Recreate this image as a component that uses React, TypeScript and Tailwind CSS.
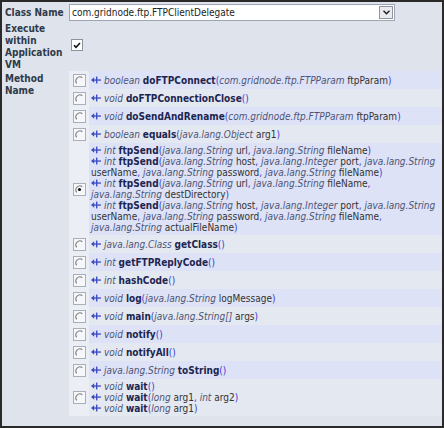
import React from "react";

type Param = { t: string; n: string };
type Method = { type: string; name: string; params: Param[] };

const S = "java.lang.String";

const rows: { methods: Method[]; selected?: boolean }[] = [
  { methods: [{ type: "boolean", name: "doFTPConnect", params: [{ t: "com.gridnode.ftp.FTPParam", n: "ftpParam" }] }] },
  { methods: [{ type: "void", name: "doFTPConnectionClose", params: [] }] },
  { methods: [{ type: "void", name: "doSendAndRename", params: [{ t: "com.gridnode.ftp.FTPParam", n: "ftpParam" }] }] },
  { methods: [{ type: "boolean", name: "equals", params: [{ t: "java.lang.Object", n: "arg1" }] }] },
  {
    selected: true,
    methods: [
      { type: "int", name: "ftpSend", params: [{ t: S, n: "url" }, { t: S, n: "fileName" }] },
      {
        type: "int",
        name: "ftpSend",
        params: [
          { t: S, n: "host" },
          { t: "java.lang.Integer", n: "port" },
          { t: S, n: "userName" },
          { t: S, n: "password" },
          { t: S, n: "fileName" },
        ],
      },
      { type: "int", name: "ftpSend", params: [{ t: S, n: "url" }, { t: S, n: "fileName" }, { t: S, n: "destDirectory" }] },
      {
        type: "int",
        name: "ftpSend",
        params: [
          { t: S, n: "host" },
          { t: "java.lang.Integer", n: "port" },
          { t: S, n: "userName" },
          { t: S, n: "password" },
          { t: S, n: "fileName" },
          { t: S, n: "actualFileName" },
        ],
      },
    ],
  },
  { methods: [{ type: "java.lang.Class", name: "getClass", params: [] }] },
  { methods: [{ type: "int", name: "getFTPReplyCode", params: [] }] },
  { methods: [{ type: "int", name: "hashCode", params: [] }] },
  { methods: [{ type: "void", name: "log", params: [{ t: S, n: "logMessage" }] }] },
  { methods: [{ type: "void", name: "main", params: [{ t: "java.lang.String[]", n: "args" }] }] },
  { methods: [{ type: "void", name: "notify", params: [] }] },
  { methods: [{ type: "void", name: "notifyAll", params: [] }] },
  { methods: [{ type: "java.lang.String", name: "toString", params: [] }] },
  {
    methods: [
      { type: "void", name: "wait", params: [] },
      { type: "void", name: "wait", params: [{ t: "long", n: "arg1" }, { t: "int", n: "arg2" }] },
      { type: "void", name: "wait", params: [{ t: "long", n: "arg1" }] },
    ],
  },
];

function Arrow() {
  return (
    <svg width="10" height="8" viewBox="0 0 10 8" className="inline-block align-[0px] mr-[3px]">
      <path d="M0 4 L3.2 1.2 L3.2 6.8 Z" fill="#3d4cc0" />
      <rect x="2" y="3.4" width="8" height="1.3" fill="#3d4cc0" />
      <rect x="5" y="0.6" width="1.4" height="6.8" fill="#3d4cc0" />
    </svg>
  );
}

function Radio({ checked }: { checked?: boolean }) {
  return (
    <svg width="13" height="13" viewBox="0 0 13 13">
      <rect x="0.5" y="0.5" width="12" height="12" fill="#f6f7fa" stroke="#a9afb9" />
      <path d="M9.3 3.7 A4 4 0 0 0 3.7 9.3" fill="none" stroke="#7d7d7d" strokeWidth="1.1" />
      {checked && <circle cx="6.5" cy="6.5" r="1.6" fill="#111" />}
    </svg>
  );
}

function MethodLine({ m }: { m: Method }) {
  return (
    <div>
      <Arrow />
      <i className="text-[#4d5577]">{m.type}</i> <b className="text-[#1c2550]">{m.name}</b>
      <span className="text-[#3b3bd0]">(</span>
      {m.params.map((p, i) => (
        <React.Fragment key={i}>
          <i className="text-[#4d5577]">{p.t}</i> <span className="text-[#333]">{p.n}</span>
          {i < m.params.length - 1 && <span className="text-[#3b3bd0]">, </span>}
        </React.Fragment>
      ))}
      <span className="text-[#3b3bd0]">)</span>
    </div>
  );
}

export default function App() {
  return (
    <div
      className="w-[444px] h-[428px] border-2 border-[#2a2a2a] bg-[#dee3ec] text-[10px] overflow-hidden"
      style={{ fontFamily: '"DejaVu Sans Condensed", "Liberation Sans", Arial, sans-serif' }}
    >
      <div className="grid grid-cols-[66px_1fr] gap-x-px">
        {/* Class Name */}
        <div className="flex items-center pl-[3px] font-bold text-[#2e3a48] leading-[12px]">Class Name</div>
        <div className="py-[2px]">
          <div className="w-[326px] h-[17px] bg-white border border-[#9ea6b3] flex items-center justify-between pl-[2px] pr-px">
            <span className="text-[#222]">com.gridnode.ftp.FTPClientDelegate</span>
            <span className="w-[14px] h-[13px] border border-[#8e96a2] bg-[#e9ebef] flex items-center justify-center">
              <svg width="7" height="5" viewBox="0 0 7 5">
                <path d="M0.5 0.8 L3.5 3.8 L6.5 0.8" fill="none" stroke="#222" strokeWidth="1.5" />
              </svg>
            </span>
          </div>
        </div>

        {/* Execute within Application VM */}
        <div className="pl-[3px] font-bold text-[#2e3a48] leading-[12px]">
          Execute
          <br />
          within
          <br />
          Application
          <br />
          VM
        </div>
        <div className="flex items-center pl-[2px] pb-[4px]">
          <div className="w-[12px] h-[12px] bg-white border border-[#8c939e] flex items-center justify-center">
            <svg width="8" height="7" viewBox="0 0 8 7">
              <path d="M1 3.3 L3 5.3 L7 1" fill="none" stroke="#111" strokeWidth="1.6" />
            </svg>
          </div>
        </div>

        {/* Method Name */}
        <div className="pl-[3px] pt-[2px] font-bold text-[#2e3a48] leading-[12px]">
          Method
          <br />
          Name
        </div>
        <div className="flex flex-col">
          {rows.map((r, i) => {
            const lav = i % 2 === 0;
            return (
              <div key={i} className="flex min-h-[18px]">
                <div className="w-[20px] bg-[#eceef6] flex items-center justify-center">
                  <Radio checked={r.selected} />
                </div>
                <div
                  className={`flex-1 flex flex-col justify-center pl-[2px] pr-[3px] py-[2px] leading-[11px] ${
                    lav ? "bg-[#dde2f6]" : "bg-[#e4e8f1]"
                  }`}
                >
                  {r.methods.map((m, j) => (
                    <MethodLine key={j} m={m} />
                  ))}
                </div>
              </div>
            );
          })}
        </div>
      </div>
    </div>
  );
}
